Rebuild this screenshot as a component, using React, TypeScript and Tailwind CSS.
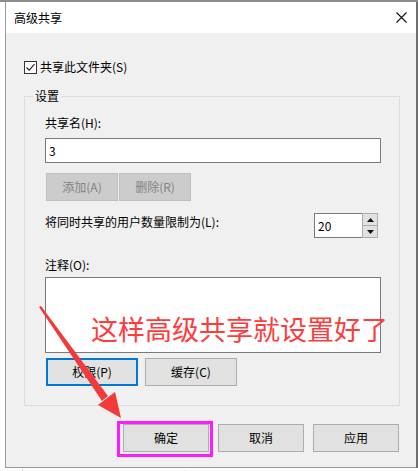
import React from 'react';

const font = { fontFamily: '"Noto Sans CJK SC", "Noto Sans", sans-serif' };

function WinButton({
  label,
  width,
  disabled = false,
  focused = false,
}: {
  label: string;
  width: string;
  disabled?: boolean;
  focused?: boolean;
}) {
  const base = 'flex h-[28px] items-center justify-center text-[12px] leading-[16px]';
  if (disabled) {
    return <div className={`${base} ${width} border border-[#bfbfbf] bg-[#cccccc] text-[#838383]`}>{label}</div>;
  }
  if (focused) {
    return <div className={`${base} ${width} border-2 border-[#0078d7] bg-[#e1e1e1] text-black`}>{label}</div>;
  }
  return <div className={`${base} ${width} border border-[#adadad] bg-[#e1e1e1] text-black`}>{label}</div>;
}

export default function App() {
  return (
    <div className="relative h-[471px] w-[418px] overflow-hidden bg-white" style={font}>
      {/* window */}
      <div className="flex border-t-2 border-[#8c8c8c]">
        <div className="w-[5px] shrink-0 bg-white" />
        <div className="w-[411px] shrink-0 border-b border-l border-[#9a9a9a]">
          {/* title bar */}
          <div className="flex h-[31px] items-center justify-between bg-white pl-[8px] pr-[10px]">
            <span className="text-[12px] leading-[16px] text-black">高级共享</span>
            <svg width="11" height="11" viewBox="0 0 11 11" className="mr-[-1px]">
              <path d="M0.5 0.5 L10.5 10.5 M10.5 0.5 L0.5 10.5" stroke="#111" strokeWidth="1.1" fill="none" />
            </svg>
          </div>

          {/* body */}
          <div className="flex h-[434px] flex-col bg-[#f0f0f0] pt-[26px]">
            <div className="ml-[18px] flex items-center gap-[3px]">
              <div className="flex h-[13px] w-[13px] items-center justify-center border border-[#333] bg-white">
                <svg width="11" height="11" viewBox="0 0 11 11">
                  <path d="M1.5 5.5 L4.2 8.2 L9.5 2.2" stroke="#222" strokeWidth="1.1" fill="none" />
                </svg>
              </div>
              <span className="text-[12px] leading-[16px] text-black">共享此文件夹(S)</span>
            </div>

            {/* group box */}
            <div className="ml-[18px] mt-[21px] h-[310px] w-[376px] border border-[#dcdcdc] pl-[20px]">
              <div className="-mt-[9px] ml-[-12px] w-fit bg-[#f0f0f0] px-[2px] text-[12px] leading-[16px] text-black">
                设置
              </div>

              <div className="mt-[11px] text-[12px] leading-[16px] text-black">共享名(H):</div>
              <div className="mt-[7px] flex h-[25px] w-[336px] items-center border border-[#7a7a7a] bg-white pl-[3px] text-[12px] text-black">
                3
              </div>

              <div className="ml-[1px] mt-[10px] flex gap-[1px]">
                <WinButton label="添加(A)" width="w-[72px]" disabled />
                <WinButton label="删除(R)" width="w-[72px]" disabled />
              </div>

              <div className="mt-[12px] flex w-[336px] items-start">
                <span className="pt-[1px] text-[12px] leading-[16px] text-black">将同时共享的用户数量限制为(L):</span>
                <div className="ml-auto mr-[3px] flex h-[25px]">
                  <div className="flex h-[25px] w-[48px] items-center border border-r-0 border-[#7a7a7a] bg-white pl-[3px] text-[12px] text-black">
                    20
                  </div>
                  <div className="flex w-[16px] flex-col border border-[#adadad] bg-[#f0f0f0]">
                    <div className="flex h-[12px] items-center justify-center border-b border-[#adadad] bg-[#e1e1e1]">
                      <svg width="7" height="4" viewBox="0 0 7 4">
                        <path d="M0 4 L3.5 0 L7 4 Z" fill="#111" />
                      </svg>
                    </div>
                    <div className="flex flex-1 items-center justify-center bg-[#e1e1e1]">
                      <svg width="7" height="4" viewBox="0 0 7 4">
                        <path d="M0 0 L3.5 4 L7 0 Z" fill="#111" />
                      </svg>
                    </div>
                  </div>
                </div>
              </div>

              <div className="mt-[19px] text-[12px] leading-[16px] text-black">注释(O):</div>
              <div className="mt-[4px] h-[76px] w-[336px] border border-[#7a7a7a] bg-white" />

              <div className="ml-[1px] mt-[5px] flex gap-[7px]">
                <WinButton label="权限(P)" width="w-[92px]" focused />
                <WinButton label="缓存(C)" width="w-[92px]" />
              </div>
            </div>

            <div className="mt-[18px] flex justify-end gap-[9px] pr-[17px]">
              <WinButton label="确定" width="w-[86px]" />
              <WinButton label="取消" width="w-[86px]" />
              <WinButton label="应用" width="w-[86px]" />
            </div>
          </div>
        </div>
        <div className="flex-1 bg-[#6e6e6e]" />
      </div>

      {/* window behind, mostly hidden */}
      <div className="ml-[22px] h-[10px] border-l border-[#d0d0d0] pl-[10px]">
        <div className="mt-[1px] whitespace-nowrap text-[12px] leading-[16px] text-black">
          若要更改此设置，请使用<span className="text-[#0066cc]">网络和共享中心</span>。
        </div>
      </div>

      {/* annotations */}
      <div className="pointer-events-none absolute left-[91px] top-[313px] whitespace-nowrap text-[27px] leading-[32px] text-[#ff3c3c]">
        这样高级共享就设置好了
      </div>
      <div className="pointer-events-none absolute left-[117px] top-[421px] h-[36px] w-[96px] border-[3px] border-[#ff1aff]" />
      <svg className="pointer-events-none absolute left-0 top-0" width="418" height="471" viewBox="0 0 418 471">
        <polygon points="39,307 41,306 108,396 102,401" fill="#f23a3a" />
        <polygon points="121,418 98,405 115,392" fill="#f23a3a" />
      </svg>
    </div>
  );
}
